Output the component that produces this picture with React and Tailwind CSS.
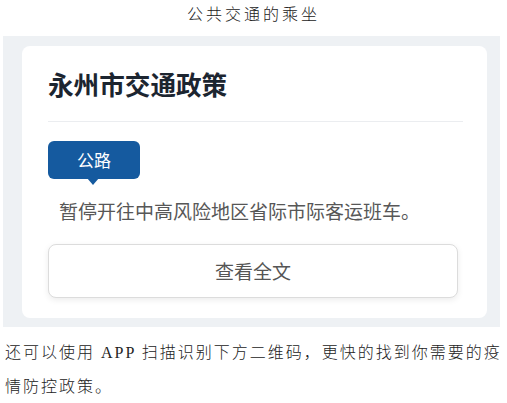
export default function App() {
  return (
    <div className="w-[507px] h-[403px] bg-white overflow-hidden font-['Noto_Sans_CJK_SC',sans-serif]">
      <p className="pt-[4px] h-[36px] text-center text-[16px] leading-[22px] tracking-[3px] text-[#222] font-light font-['Liberation_Serif','Noto_Sans_CJK_SC',serif]">
        公共交通的乘坐
      </p>

      {/* screenshot panel */}
      <div className="mx-[3px] w-[497px] h-[291px] bg-[#eef1f4] pt-[10px] pl-[19px]">
        <div className="w-[465px] h-[272px] bg-white rounded-[8px] px-[26px]">
          <h1 className="pt-[22px] text-[25.6px] leading-[32px] font-bold text-[#1c2530]">
            永州市交通政策
          </h1>
          <div className="mt-[21px] mr-[-2px] h-px bg-[#ebedf0]" />

          <div className="relative mt-[19px] w-[92px] h-[38px] bg-[#155a9f] rounded-[6px] flex items-center justify-center text-white text-[17px]">
            公路
            <span className="absolute left-[39px] top-[37px] w-0 h-0 border-l-[6px] border-r-[6px] border-t-[7px] border-l-transparent border-r-transparent border-t-[#155a9f]" />
          </div>

          <p className="mt-[19px] pl-[11px] text-[19px] leading-[26px] text-[#575757] whitespace-nowrap">
            暂停开往中高风险地区省际市际客运班车。
          </p>

          <button className="mt-[20px] w-[410px] h-[54px] rounded-[8px] border border-[#dcdcdc] bg-white shadow-[0_2px_6px_rgba(0,0,0,0.08)] text-[19px] text-[#555] flex items-center justify-center">
            查看全文
          </button>
        </div>
      </div>

      <p className="pl-[5px] pt-[9px] text-[16px] leading-[34px] tracking-[2px] text-[#222] font-light font-['Liberation_Serif','Noto_Sans_CJK_SC',serif]">
        还可以使用 APP 扫描识别下方二维码，更快的找到你需要的疫情防控政策。
      </p>
    </div>
  );
}
